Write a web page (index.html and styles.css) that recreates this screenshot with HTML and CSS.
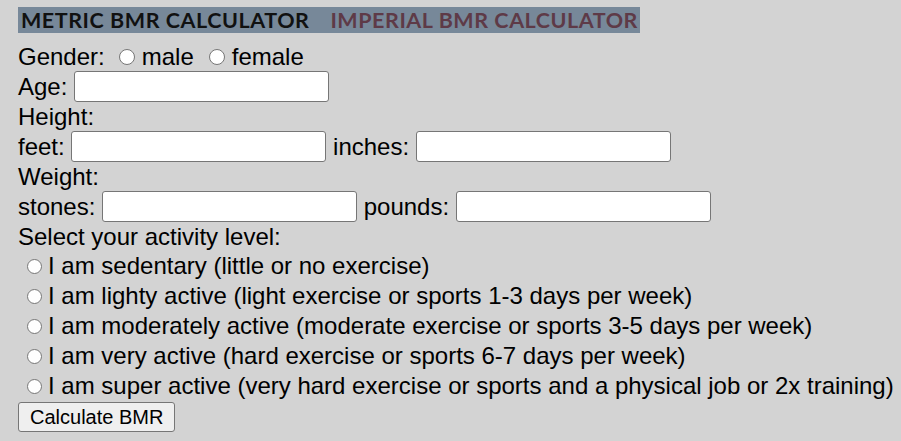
FILE: index.html
```html
<!DOCTYPE html>
<html>
<head>
<meta charset="utf-8">
<link rel="stylesheet" href="styles.css">
</head>
<body>
<div class="page">
  <div class="tabs">
    <span class="tab tab-active">METRIC BMR CALCULATOR</span>
    <span class="tab tab-other">IMPERIAL BMR CALCULATOR</span>
  </div>
  <form class="form">
    <div class="line line-gender"><span>Gender:</span><input type="radio" name="g" class="radio radio-g1"><span>male</span><input type="radio" name="g" class="radio radio-g2"><span>female</span></div>
    <div class="line line-input">Age: <input type="text" class="field"></div>
    <div class="line line-text">Height:</div>
    <div class="line line-input">feet: <input type="text" class="field"> inches: <input type="text" class="field"></div>
    <div class="line line-text">Weight:</div>
    <div class="line line-input">stones: <input type="text" class="field"> pounds: <input type="text" class="field"></div>
    <div class="line line-text">Select your activity level:</div>
    <div class="line line-radio"><input type="radio" name="a" class="radio radio-a">I am sedentary (little or no exercise)</div>
    <div class="line line-radio"><input type="radio" name="a" class="radio radio-a">I am lighty active (light exercise or sports 1-3 days per week)</div>
    <div class="line line-radio"><input type="radio" name="a" class="radio radio-a">I am moderately active (moderate exercise or sports 3-5 days per week)</div>
    <div class="line line-radio"><input type="radio" name="a" class="radio radio-a">I am very active (hard exercise or sports 6-7 days per week)</div>
    <div class="line line-radio"><input type="radio" name="a" class="radio radio-a">I am super active (very hard exercise or sports and a physical job or 2x training)</div>
    <div class="line line-button"><button type="button" class="btn">Calculate BMR</button></div>
  </form>
</div>
</body>
</html>
```
FILE: styles.css
```css
html, body {
  margin: 0;
  padding: 0;
  background: #d3d3d3;
}
body {
  font-family: "Liberation Sans", Arial, sans-serif;
  font-size: 24px;
  color: #000;
  overflow: hidden;
}
.page {
  padding: 6px 0 0 18px;
}
.tabs {
  display: inline-flex;
  align-items: center;
  height: 26px;
  background: #778899;
  padding: 0 2px 0 3px;
  gap: 21px;
}
.tab {
  font-family: Lato, "DejaVu Sans", sans-serif;
  font-weight: 700;
  font-size: 21.5px;
  letter-spacing: 0.55px;
  line-height: 26px;
  white-space: nowrap;
}
.tab-active { color: #111; }
.tab-other { color: #5e3a47; }
.form { margin: 0; }
.line {
  display: flex;
  align-items: center;
  white-space: pre;
}
.line-gender { height: 37px; padding-top: 9px; box-sizing: border-box; }
.line-input { height: 31px; }
.line-text { height: 29px; }
.line-radio { height: 30px; }
.line-button { height: 31px; padding-top: 1px; box-sizing: border-box; align-items: flex-start; }
.field {
  box-sizing: border-box;
  width: 255px;
  height: 31px;
  margin: 0;
  border: 1px solid #767676;
  border-radius: 3px;
  background: #fff;
  font: inherit;
  padding: 0 4px;
}
.radio {
  appearance: none;
  -webkit-appearance: none;
  box-sizing: border-box;
  width: 15px;
  height: 15px;
  border: 1px solid #767676;
  border-radius: 50%;
  background: #fff;
  margin: 0;
  flex: none;
}
.radio-g1 { width: 16px; height: 16px; margin: 0 7px 0 14px; }
.radio-g2 { width: 16px; height: 16px; margin: 0 7px 0 15px; }
.radio-a { margin: 0 6px 0 9px; }
.btn {
  box-sizing: border-box;
  height: 30px;
  padding: 0 11px;
  font-family: "Liberation Sans", Arial, sans-serif;
  font-size: 20px;
  color: #000;
  background: #efefef;
  border: 1px solid #767676;
  border-radius: 3px;
}
```
